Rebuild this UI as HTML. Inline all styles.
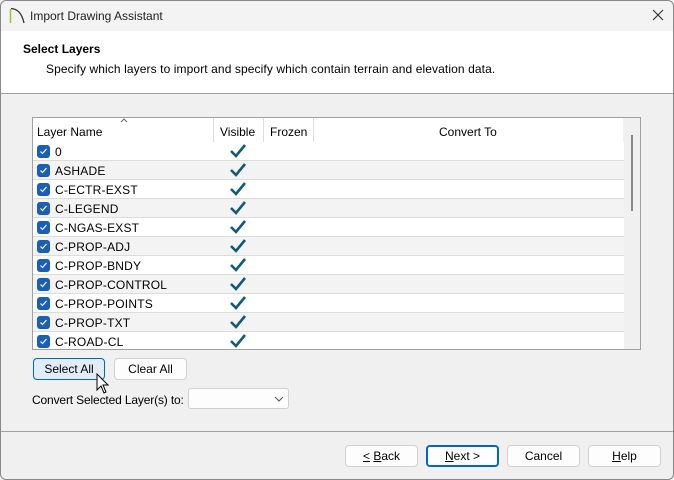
<!DOCTYPE html><html><head><style>
body{margin:0;width:674px;height:480px;overflow:hidden;font-family:"Liberation Sans",sans-serif;font-size:12px;color:#000;background:#f0f0f0;position:relative}
.a{position:absolute}
.btn{position:absolute;height:22px;background:#fdfdfd;border:1px solid #d0d0d0;border-radius:4px;box-sizing:border-box;text-align:center;line-height:21px;font-size:12px}
.row{position:absolute;left:0;width:591px;height:19px;border-bottom:1px solid #dcdcdc;box-sizing:border-box}
.cb{position:absolute;left:4px;top:3px;width:13px;height:13px;background:#1a5fb4;border-radius:3px}
.cb svg{position:absolute;left:2px;top:2px}
.nm{position:absolute;left:22px;top:3px;letter-spacing:0.2px}
.ck{position:absolute;left:196px;top:1px}
</style></head><body>
<div class="a" style="left:0;top:0;width:674px;height:31px;background:#f3f3f3"></div>
<svg class="a" style="left:9px;top:7px" width="16" height="17"><path d="M1.5 16V2" stroke="#8cc63f" stroke-width="1.5"/><path d="M2 1.5Q12 2 15 16" stroke="#333" fill="none" stroke-width="1.3"/></svg>
<div class="a" style="left:30px;top:9px;font-size:12px;color:#222">Import Drawing Assistant</div>
<svg class="a" style="left:652px;top:9px" width="12" height="12"><path d="M1 1L11 11M11 1L1 11" stroke="#333" stroke-width="1.2"/></svg>
<div class="a" style="left:0;top:31px;width:674px;height:62px;background:#fff;border-bottom:1px solid #a0a0a0"></div>
<div class="a" style="left:23px;top:42px;font-weight:bold">Select Layers</div>
<div class="a" style="left:46px;top:62px;letter-spacing:0.1px">Specify which layers to import and specify which contain terrain and elevation data.</div>
<div class="a" style="left:32px;top:117px;width:609px;height:233px;background:#fff;border:1px solid #a0a0a0;box-sizing:border-box;overflow:hidden">
<div class="a" style="left:180px;top:0;width:1px;height:232px;background:#dcdcdc"></div>
<div class="a" style="left:230px;top:0;width:1px;height:232px;background:#dcdcdc"></div>
<div class="a" style="left:280px;top:0;width:1px;height:232px;background:#dcdcdc"></div>
<div class="a" style="left:590px;top:0;width:18px;height:232px;background:#f0f0f0"></div>
<div class="a" style="left:598px;top:17px;width:2px;height:76px;background:#888"></div>
<svg class="a" style="left:87px;top:0" width="8" height="5"><path d="M1 4L4 1L7 4" stroke="#666" fill="none"/></svg>
<div class="a" style="left:4px;top:7px">Layer Name</div>
<div class="a" style="left:187px;top:7px">Visible</div>
<div class="a" style="left:237px;top:7px">Frozen</div>
<div class="a" style="left:406px;top:7px">Convert To</div>
<div id="rows"></div>
</div>
<div class="btn" style="left:33px;top:358px;width:72px;background:#e1ecf7;border-color:#0067c0">Select All</div>
<svg class="a" style="left:96px;top:373px" width="14" height="22"><path d="M1 1V17L5 13L8 20L10 19L7 12H12Z" fill="#fff" stroke="#000"/></svg>
<div class="btn" style="left:114px;top:358px;width:73px">Clear All</div>
<div class="a" style="left:32px;top:393px;letter-spacing:-0.15px">Convert Selected Layer(s) to:</div>
<div class="a" style="left:188px;top:388px;width:101px;height:21px;background:#fdfdfd;border:1px solid #d0d0d0;border-radius:3px;box-sizing:border-box"><svg class="a" style="left:85px;top:7px" width="10" height="6"><path d="M1 1L5 5L9 1" stroke="#555" fill="none"/></svg></div>
<div class="a" style="left:0;top:431px;width:674px;height:1px;background:#a0a0a0"></div>
<div class="btn" style="left:345px;top:445px;width:73px"><u>&lt;</u> <u>B</u>ack</div>
<div class="btn" style="left:426px;top:445px;width:73px;border:2px solid #0067c0;line-height:19px"><u>N</u>ext &gt;</div>
<div class="btn" style="left:507px;top:445px;width:73px">Cancel</div>
<div class="btn" style="left:588px;top:445px;width:73px"><u>H</u>elp</div>
<div class="a" style="left:0;top:0;width:674px;height:480px;border:1px solid #888;box-sizing:border-box;border-radius:6px"></div>
<script>
var n=["0","ASHADE","C-ECTR-EXST","C-LEGEND","C-NGAS-EXST","C-PROP-ADJ","C-PROP-BNDY","C-PROP-CONTROL","C-PROP-POINTS","C-PROP-TXT","C-ROAD-CL"],h="";
n.forEach(function(s,i){h+='<div class="row" style="top:'+(24+i*19)+'px;background:'+(i%2?'#f3f3f3':'#fff')+'"><div class="cb"><svg width="9" height="9"><path d="M1.5 4.5L3.5 6.5L7.5 2" stroke="#fff" fill="none" stroke-width="1.2"/></svg></div><div class="nm">'+s+'</div><svg class="ck" width="18" height="16"><path d="M2 8L7 13L16 2" stroke="#0f5a7a" stroke-width="2.6" fill="none"/></svg></div>'});
document.getElementById("rows").innerHTML=h;
</script>
</body></html>
